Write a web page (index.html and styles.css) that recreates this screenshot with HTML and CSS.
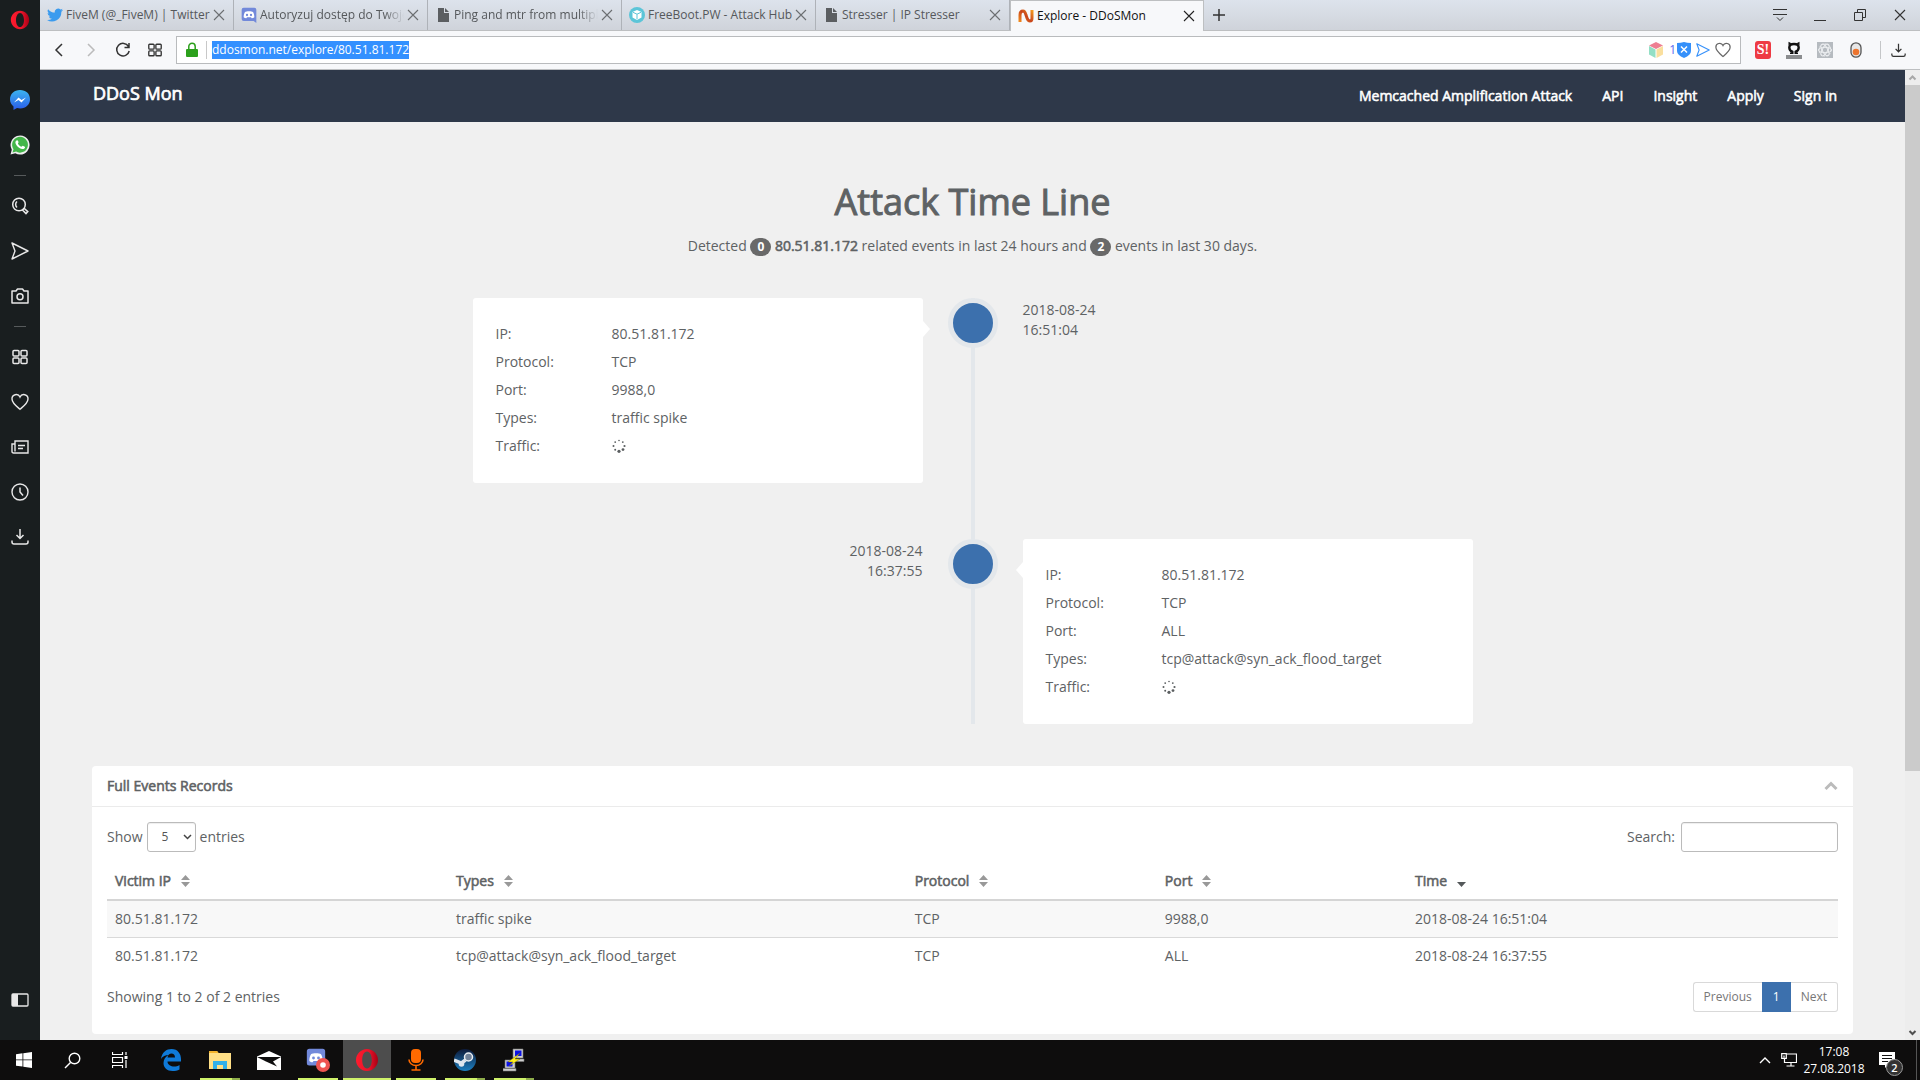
FILE: index.html
```html
<!DOCTYPE html>
<html lang="en">
<head>
<meta charset="utf-8">
<title>Explore - DDoSMon</title>
<link rel="stylesheet" href="styles.css">
</head>
<body>
<svg class="defs" aria-hidden="true">
  <defs>
    <linearGradient id="g-opera" x1="0" x2="1" y1="0" y2="0"><stop offset="0" stop-color="#ff1b2d"/><stop offset=".6" stop-color="#e8132a"/><stop offset="1" stop-color="#a70014"/></linearGradient>
    <linearGradient id="g-msg" x1="0" x2="0" y1="0" y2="1"><stop offset="0" stop-color="#3cb4f0"/><stop offset="1" stop-color="#2a5be8"/></linearGradient>
    <linearGradient id="g-n" x1="0" x2="1" y1="1" y2="0"><stop offset="0" stop-color="#f08a1c"/><stop offset=".5" stop-color="#c8441c"/><stop offset="1" stop-color="#f39a1e"/></linearGradient>
    <linearGradient id="g-steam" x1="0" x2="0" y1="0" y2="1"><stop offset="0" stop-color="#0d1a3a"/><stop offset="1" stop-color="#1d7fc0"/></linearGradient>
  </defs>
  <symbol id="i-opera" viewBox="0 0 24 24"><path fill="url(#g-opera)" fill-rule="evenodd" d="M12 1C6 1 1 6 1 12S6 23 12 23 23 18 23 12 18 1 12 1zm0 2.500c3 0 4.800 4 4.800 8.500s-1.800 8.500-4.800 8.500S7.200 16.500 7.200 12 9 3.500 12 3.500z"/></symbol>
  <symbol id="i-x" viewBox="0 0 12 12"><path d="M1 1l10 10M11 1L1 11" fill="none" stroke="currentColor" stroke-width="1.100"/></symbol>
  <symbol id="i-doc" viewBox="0 0 12 16"><path d="M1 1h6v5h5v9H1z" fill="#5b5e61"/><path d="M8 1l4 4H8z" fill="#5b5e61"/></symbol>
  <symbol id="i-discord" viewBox="0 0 24 24"><path d="M4 1h16a3 3 0 013 3v20l-4-3H4a3 3 0 01-3-3V4a3 3 0 013-3z" fill="#7289da"/><path d="M6 7.500C8 6 16 6 18 7.500c1.500 2.500 2 5 2 8-1 1-2.500 1.500-4 1.500l-1-1.500H9L8 17c-1.500 0-3-.5-4-1.500 0-3 .5-5.500 2-8z" fill="#fff"/><circle cx="9" cy="12" r="1.700" fill="#7289da"/><circle cx="15" cy="12" r="1.700" fill="#7289da"/></symbol>
  <symbol id="i-grid" viewBox="0 0 18 18"><g fill="none" stroke="currentColor" stroke-width="1.500"><rect x="2" y="2.500" width="6" height="5.500" rx="1"/><rect x="10" y="2.500" width="6" height="5.500" rx="1"/><rect x="2" y="10" width="6" height="5.500" rx="1"/><rect x="10" y="10" width="6" height="5.500" rx="1"/></g></symbol>
  <symbol id="i-heart" viewBox="0 0 18 18"><path d="M9 16.300C5 13 1 10 1 6a4.200 4.200 0 018-2 4.200 4.200 0 018 2c0 4-4 7-8 10.300z" fill="none" stroke="currentColor" stroke-width="1.400"/></symbol>
  <symbol id="i-send" viewBox="0 0 18 18"><path d="M1 1l16 8-16 8 3-8z" fill="none" stroke="currentColor" stroke-width="1.400" stroke-linejoin="round"/></symbol>
  <symbol id="i-down" viewBox="0 0 18 18"><path d="M9 1v9M5.500 7L9 10.500 12.500 7M1 12.500v1.500q0 2 2 2h12q2 0 2-2v-1.500" fill="none" stroke="currentColor" stroke-width="1.500"/></symbol>
  <symbol id="i-spin" viewBox="0 0 14 14"><g fill="#5a5e60"><circle cx="7" cy="12.300" r="1.600"/><circle cx="11" cy="10.600" r="1.400"/><circle cx="12.500" cy="7" r="1.100"/><circle cx="10.800" cy="3.100" r=".9"/><circle cx="7" cy="1.500" r=".8"/><circle cx="3.200" cy="3.100" r=".9"/><circle cx="1.500" cy="7" r="1"/><circle cx="3.200" cy="10.800" r="1"/></g></symbol>
  <symbol id="i-sort" viewBox="0 0 9 12"><path d="M4.500 0L9 5H0zM4.500 12L9 7H0z" fill="#999"/></symbol>
</svg>

<div class="desktop">
  <nav class="side" aria-label="Browser sidebar">
    <button class="side-logo" aria-label="Opera menu"><svg width="20" height="20"><use href="#i-opera"/></svg></button>
    <button aria-label="Messenger"><svg width="20" height="20" viewBox="0 0 20 20"><path d="M10 0C4 0 0 4 0 9.500c0 3 1.500 5 3.500 7V20l3.500-2c7 2 13-2.500 13-8.500S16 0 10 0z" fill="url(#g-msg)"/><path d="M4 12.500L8.500 7.500l3 2.500L16 7.500l-4.500 5-3-2.500z" fill="#fff"/></svg></button>
    <button aria-label="WhatsApp"><svg width="20" height="20" viewBox="0 0 20 20"><path d="M.5 19.500l1.300-4.800A9.500 9.500 0 1110 19.500a10 10 0 01-4.700-1.200z" fill="#eee"/><path d="M2.500 17.500l1-3.300a7.900 7.900 0 112.600 2.400z" fill="#43b649"/><path d="M6.500 5.500c1-.8 1.500 0 2 1.500.2.700-.8 1.300-.5 1.700.8 1.500 1.800 2.300 3.300 3 .6.100 1-1.200 1.600-1 2.600 1.200 2.500 1.400 1.500 2.700-1 1-3 1-5-.3-2.400-1.600-4-3.800-4-5.500 0-1 .5-1.600 1.100-2.100z" fill="#fff"/></svg></button>
    <hr>
    <button aria-label="Search"><svg width="18" height="18" viewBox="0 0 18 18"><g fill="none" stroke="currentColor" stroke-width="1.500"><circle cx="8" cy="7.500" r="6.300"/><path d="M6 4.500a4 4 0 000 6M11.500 13l1.800-1.600 3.500 3.200-1.800 2z"/></g></svg></button>
    <button aria-label="My Flow"><svg width="18" height="18"><use href="#i-send"/></svg></button>
    <button aria-label="Snapshot"><svg width="18" height="18" viewBox="0 0 18 18"><g fill="none" stroke="currentColor" stroke-width="1.500"><path d="M1 4h4l1.500-2h5L13 4h4v12H1z" stroke-linejoin="round"/><circle cx="9" cy="9.700" r="3"/></g></svg></button>
    <hr>
    <button aria-label="Speed Dial"><svg width="18" height="18"><use href="#i-grid"/></svg></button>
    <button aria-label="Bookmarks"><svg width="18" height="18"><use href="#i-heart"/></svg></button>
    <button aria-label="Personal news"><svg width="18" height="18" viewBox="0 0 18 18"><path d="M4 3h13v12H2.500Q1 15 1 13.500V6h3zM4 6v7.500M7 7.500h7M7 10.500h5" fill="none" stroke="currentColor" stroke-width="1.400"/></svg></button>
    <button aria-label="History"><svg width="18" height="18" viewBox="0 0 18 18"><path d="M9 4.500V9l3 3.500" fill="none" stroke="currentColor" stroke-width="1.500"/><circle cx="9" cy="9" r="8" fill="none" stroke="currentColor" stroke-width="1.400"/></svg></button>
    <button aria-label="Downloads"><svg width="18" height="18"><use href="#i-down"/></svg></button>
    <button class="side-last" aria-label="Sidebar setup"><svg width="18" height="16" viewBox="0 0 18 16"><rect x="1" y="2" width="16" height="12" rx="1" fill="none" stroke="currentColor" stroke-width="1.300"/><path d="M1 2h6v12H1z" fill="currentColor"/></svg></button>
  </nav>

  <div class="browser">
    <div class="tabs">
      <div class="tab"><svg width="16" height="16" viewBox="0 0 24 24"><path fill="#3b9bee" d="M24 4.600a10 10 0 01-2.800.8 5 5 0 002.100-2.700 10 10 0 01-3.100 1.200 4.900 4.900 0 00-8.400 4.500A14 14 0 011.700 3.200a4.900 4.900 0 001.500 6.500 4.900 4.900 0 01-2.200-.6 4.900 4.900 0 003.900 4.900 5 5 0 01-2.200.1 4.900 4.900 0 004.600 3.400A9.900 9.900 0 010 19.500a14 14 0 0021.500-12.400A10 10 0 0024 4.600z"/></svg><span>FiveM (@_FiveM) | Twitter</span><button aria-label="Close tab"><svg width="12" height="12"><use href="#i-x"/></svg></button></div>
      <div class="tab long"><svg width="16" height="16"><use href="#i-discord"/></svg><span>Autoryzuj dostęp do Twoje</span><button aria-label="Close tab"><svg width="12" height="12"><use href="#i-x"/></svg></button></div>
      <div class="tab long"><svg width="16" height="16"><use href="#i-doc"/></svg><span>Ping and mtr from multiple</span><button aria-label="Close tab"><svg width="12" height="12"><use href="#i-x"/></svg></button></div>
      <div class="tab"><svg width="16" height="16" viewBox="0 0 16 16"><circle cx="8" cy="8" r="8" fill="#5cc5d8"/><path d="M8 3l4.500 2v5.500L8 13l-4.500-2.500V5z" fill="#fff"/><path d="M4 5.300l4 1.900 4-1.900M8 7.200v5" fill="none" stroke="#5cc5d8"/></svg><span>FreeBoot.PW - Attack Hub</span><button aria-label="Close tab"><svg width="12" height="12"><use href="#i-x"/></svg></button></div>
      <div class="tab"><svg width="16" height="16"><use href="#i-doc"/></svg><span>Stresser | IP Stresser</span><button aria-label="Close tab"><svg width="12" height="12"><use href="#i-x"/></svg></button></div>
      <div class="tab active"><svg width="16" height="16" viewBox="0 0 16 16"><path d="M2 14V7q0-4 3-4 2 0 3 4l1 3q1 3 3 3t2-3V2" fill="none" stroke="url(#g-n)" stroke-width="3"/></svg><span>Explore - DDoSMon</span><button aria-label="Close tab"><svg width="12" height="12"><use href="#i-x"/></svg></button></div>
      <button class="new-tab" aria-label="New tab"><svg width="12" height="12" viewBox="0 0 12 12"><path d="M6 0v12M0 6h12" stroke="#333" stroke-width="1.500"/></svg></button>
      <div class="win">
        <button aria-label="Tab menu"><svg width="14" height="14" viewBox="0 0 14 14"><path d="M0 1.500h14M0 6.500h14M4 9.500l3 3 3-3" fill="none" stroke="#333"/></svg></button>
        <button aria-label="Minimise"><svg width="12" height="12" viewBox="0 0 12 12"><path d="M0 11.500h12" stroke="#333"/></svg></button>
        <button aria-label="Restore"><svg width="12" height="12" viewBox="0 0 12 12"><path d="M.5 3.500h8v8h-8zM3.500 3.500v-3h8v8h-3" fill="none" stroke="#333"/></svg></button>
        <button aria-label="Close window"><svg width="12" height="12"><use href="#i-x"/></svg></button>
      </div>
    </div>

    <div class="toolbar">
      <button aria-label="Back"><svg width="16" height="16" viewBox="0 0 16 16"><path d="M11 2L5 8l6 6" fill="none" stroke="#333" stroke-width="1.500"/></svg></button>
      <button aria-label="Forward"><svg width="16" height="16" viewBox="0 0 16 16"><path d="M5 2l6 6-6 6" fill="none" stroke="#bbb" stroke-width="1.500"/></svg></button>
      <button aria-label="Reload"><svg width="16" height="16" viewBox="0 0 16 16"><path d="M13.500 4.500A6.300 6.300 0 1014.200 9M14 1v4.500H9.500" fill="none" stroke="#333" stroke-width="1.500"/></svg></button>
      <button aria-label="Speed Dial"><svg width="16" height="16"><use href="#i-grid"/></svg></button>
      <div class="address">
        <svg class="lock" width="14" height="16" viewBox="0 0 14 16"><rect x="1" y="7" width="12" height="8" rx="1" fill="#2ca01c"/><path d="M3.800 7V4.500a3.200 3.200 0 016.400 0V7" fill="none" stroke="#2ca01c" stroke-width="1.500"/></svg>
        <a class="url" href="#"><mark>ddosmon.net/explore/80.51.81.172</mark></a>
        <svg width="16" height="18" viewBox="0 0 16 18"><path d="M8 1l7 3.500L8 8 1 4.500z" fill="#ee7f92"/><path d="M1 5l6.500 3.400V17L1 13.500z" fill="#93dfc5"/><path d="M15 5L8.500 8.400V17l6.500-3.500z" fill="#fadf9e"/></svg>
        <span class="count">1</span>
        <svg width="14" height="16" viewBox="0 0 14 16"><path d="M0 1q4 0 7-1 3 1 7 1v8q0 4-7 7Q0 13 0 9z" fill="#3590fa"/><path d="M4 4.500l6 6M10 4.500l-6 6" stroke="#fff" stroke-width="1.500"/></svg>
        <svg class="blue" width="14" height="14"><use href="#i-send"/></svg>
        <svg class="grey" width="16" height="16"><use href="#i-heart"/></svg>
      </div>
      <div class="exts">
        <button class="ext-s" aria-label="Stylish">S!</button>
        <button aria-label="GitHub"><svg width="16" height="18" viewBox="0 0 16 18"><path d="M6.300 13v-2.300C4.500 10 3.300 8.800 3.300 6.500S5 3 8 3s4.700 1.200 4.700 3.500-1.200 3.500-3 4.200V13" fill="none" stroke="#111" stroke-width="2.400"/><path d="M2.500.800l3 1.500-3 2zM13.500.800l-3 1.500 3 2z" fill="#111"/><path d="M4 12.300h3M9 12.300h3" stroke="#111" stroke-width="1.500"/><path d="M0 14h16v4H0z" fill="#8b8d8f"/></svg></button>
        <button aria-label="React tools"><svg width="16" height="16" viewBox="0 0 16 16"><path d="M0 0h16v16H0z" fill="#b6bbc0"/><g fill="none" stroke="#eef0f2"><ellipse cx="8" cy="8" rx="6.500" ry="2.700"/><ellipse cx="8" cy="8" rx="6.500" ry="2.700" transform="rotate(60 8 8)"/><ellipse cx="8" cy="8" rx="6.500" ry="2.700" transform="rotate(120 8 8)"/><circle cx="8" cy="8" r="6" stroke-dasharray="2 1"/></g></svg></button>
        <button aria-label="Toggle"><svg width="12" height="16" viewBox="0 0 12 16"><rect x="1" y=".8" width="10" height="14.400" rx="5" fill="#e7e7e7" stroke="#555" stroke-width="1.300"/><circle cx="6" cy="10" r="3.300" fill="#ec742e"/></svg></button>
        <button class="dl" aria-label="Downloads"><svg width="15" height="15"><use href="#i-down"/></svg></button>
      </div>
    </div>

    <div class="view">
      <div class="page">
        <header class="navbar">
          <a class="brand" href="#">DDoS Mon</a>
          <nav class="menu"><a href="#">Memcached Amplification Attack</a><a href="#">API</a><a href="#">Insight</a><a href="#">Apply</a><a href="#">Sign in</a></nav>
        </header>

        <main>
          <h1>Attack Time Line</h1>
          <p class="lead">Detected <span class="badge">0</span> <strong>80.51.81.172</strong> related events in last 24 hours and <span class="badge">2</span> events in last 30 days.</p>

          <section class="timeline">
            <article class="event">
              <dl class="card">
                <dt>IP:</dt><dd>80.51.81.172</dd>
                <dt>Protocol:</dt><dd>TCP</dd>
                <dt>Port:</dt><dd>9988,0</dd>
                <dt>Types:</dt><dd>traffic spike</dd>
                <dt>Traffic:</dt><dd><svg width="14" height="14"><use href="#i-spin"/></svg></dd>
              </dl>
              <span class="dot"></span>
              <time>2018-08-24<br>16:51:04</time>
            </article>
            <article class="event flip">
              <time>2018-08-24<br>16:37:55</time>
              <span class="dot"></span>
              <dl class="card">
                <dt>IP:</dt><dd>80.51.81.172</dd>
                <dt>Protocol:</dt><dd>TCP</dd>
                <dt>Port:</dt><dd>ALL</dd>
                <dt>Types:</dt><dd>tcp@attack@syn_ack_flood_target</dd>
                <dt>Traffic:</dt><dd><svg width="14" height="14"><use href="#i-spin"/></svg></dd>
              </dl>
            </article>
          </section>

          <section class="panel">
            <div class="panel-head"><h2>Full Events Records</h2><button aria-label="Collapse"><svg width="14" height="10" viewBox="0 0 14 10"><path d="M1.500 8L7 2.500 12.500 8" fill="none" stroke="#bbb" stroke-width="3"/></svg></button></div>
            <div class="panel-body">
              <div class="row">
                <label class="length">Show <span class="pick"><select><option>5</option><option>10</option></select><svg width="9" height="6" viewBox="0 0 9 6"><path d="M1 1l3.500 3.500L8 1" fill="none" stroke="#444" stroke-width="1.500"/></svg></span> entries</label>
                <label class="search">Search: <input type="search"></label>
              </div>
              <table>
                <colgroup><col class="c-ip"><col class="c-types"><col class="c-proto"><col class="c-port"><col></colgroup>
                <thead><tr>
                  <th>Victim IP<svg width="9" height="12"><use href="#i-sort"/></svg></th>
                  <th>Types<svg width="9" height="12"><use href="#i-sort"/></svg></th>
                  <th>Protocol<svg width="9" height="12"><use href="#i-sort"/></svg></th>
                  <th>Port<svg width="9" height="12"><use href="#i-sort"/></svg></th>
                  <th>Time<svg width="9" height="12" viewBox="0 0 9 12"><path d="M0 7h9l-4.500 5z" fill="#54585a"/></svg></th>
                </tr></thead>
                <tbody>
                  <tr><td>80.51.81.172</td><td>traffic spike</td><td>TCP</td><td>9988,0</td><td>2018-08-24 16:51:04</td></tr>
                  <tr><td>80.51.81.172</td><td>tcp@attack@syn_ack_flood_target</td><td>TCP</td><td>ALL</td><td>2018-08-24 16:37:55</td></tr>
                </tbody>
              </table>
              <div class="row foot">
                <span>Showing 1 to 2 of 2 entries</span>
                <nav class="pager"><a href="#">Previous</a><a class="on" href="#">1</a><a href="#">Next</a></nav>
              </div>
            </div>
          </section>
        </main>
      </div>
      <div class="scroll" aria-hidden="true">
        <svg width="15" height="15" viewBox="0 0 15 15"><path d="M4.500 9.500l3-3 3 3" fill="none" stroke="#a8a8a8" stroke-width="2"/></svg>
        <span class="thumb"></span>
        <svg width="15" height="15" viewBox="0 0 15 15"><path d="M4.500 6l3 3 3-3" fill="none" stroke="#505050" stroke-width="2"/></svg>
      </div>
    </div>
  </div>
</div>

<footer class="taskbar">
  <button aria-label="Start"><svg width="16" height="16" viewBox="0 0 16 16"><path d="M0 2.200L6.500 1.300v6.200H0zM7.300 1.200L16 0v7.500H7.300zM0 8.300h6.500v6.300L0 13.700zM7.300 8.300H16V16l-8.700-1.200z" fill="#fff"/></svg></button>
  <button aria-label="Search"><svg width="17" height="17" viewBox="0 0 17 17"><circle cx="10.500" cy="6.500" r="5.300" fill="none" stroke="#fff" stroke-width="1.400"/><path d="M6.500 10.500L1 16" stroke="#fff" stroke-width="1.400"/></svg></button>
  <button class="view-btn" aria-label="Task view"><svg width="16" height="16" viewBox="0 0 16 16"><path d="M.5 0v2.500h10V0M.5 16v-2.500h10V16M.5 5.500h10v5H.5zM14 0v3M14 8v8" fill="none" stroke="#fff" stroke-width="1.200"/><path d="M12.500 4h3v3h-3z" fill="#fff"/></svg></button>
  <button class="app" aria-label="Edge"><svg width="20" height="22" viewBox="0 0 20 22"><path d="M0 10C1 3 5.500 0 10.500 0 17 0 20 5 20 10v2.500H6.500c0 3.500 3.500 5 6.500 5 2 0 4-.5 5.500-1.500v4.500c-2 1-4.500 1.500-7 1.500C6 22 2.500 18.500 2.500 14c0-3.500 2-6.500 5-8C4.500 6 1.500 7.500 0 10zm6.500-1.500H14C14 6 12.500 4.500 10.500 4.500S7 6 6.500 8.500z" fill="#0f7ad8"/></svg></button>
  <button class="app run multi" aria-label="File Explorer"><svg width="22" height="20" viewBox="0 0 22 20"><path d="M0 1h8l1.500 2H22v16H0z" fill="#ffdf86"/><path d="M0 1h8l1.500 2H0z" fill="#f3b32c"/><path d="M4 19v-8h14v8h-4v-4H8v4z" fill="#31b0ea"/></svg></button>
  <button class="app" aria-label="Mail"><svg width="24" height="19" viewBox="0 0 24 19"><path d="M0 5.500L12 0l12 5.500V19H0z" fill="#fff"/><path d="M0 6h24l-8 4.500 4 5L9 10.500z" fill="#0e0d0d"/></svg></button>
  <button class="app run" aria-label="Discord"><svg width="24" height="24" viewBox="0 0 24 24"><svg width="20" height="20"><use href="#i-discord"/></svg><circle cx="17" cy="17" r="7" fill="#ef5350"/><circle cx="17" cy="17" r="2.800" fill="#fff"/></svg></button>
  <button class="app run current" aria-label="Opera"><svg width="24" height="24"><use href="#i-opera"/></svg></button>
  <button class="app run" aria-label="Recorder"><svg width="16" height="22" viewBox="0 0 16 22"><rect x="3" y="0" width="10" height="14" rx="4" fill="#ff6a00"/><path d="M1 10.500a7 6 0 0014 0M8 17v4M3.500 21h9" fill="none" stroke="#ff6a00" stroke-width="1.600"/></svg></button>
  <button class="app run multi" aria-label="Steam"><svg width="22" height="22" viewBox="0 0 22 22"><circle cx="11" cy="11" r="11" fill="url(#g-steam)"/><path d="M0 11l7.500 3 4-3" stroke="#dfe6ee" stroke-width="3.500" fill="none"/><circle cx="7.500" cy="15" r="2.800" fill="#dfe6ee"/><circle cx="14.500" cy="8" r="4" fill="#6f8199" stroke="#e8edf2" stroke-width="1.500"/></svg></button>
  <button class="app run multi" aria-label="PuTTY"><svg width="22" height="24" viewBox="0 0 22 24"><g fill="#cfcfcf" stroke="#777" stroke-width=".6"><path d="M10 1h10v9H10zM9 11h12v2.500H9zM2 12h10v8H2zM0 20.500h13V23H0z"/></g><path d="M12 2.500h6.500V8H12zM3.500 13.500H9.500v5h-6z" fill="#0c12e6"/><path d="M17 5L5 14h5l-4 4 11-7h-5z" fill="#ffee1a" stroke="#665c00" stroke-width=".4"/></svg></button>
  <div class="tray">
    <button aria-label="Hidden icons"><svg width="12" height="8" viewBox="0 0 12 8"><path d="M1 7l5-5 5 5" fill="none" stroke="#fff" stroke-width="1.400"/></svg></button>
    <button aria-label="Network"><svg width="16" height="14" viewBox="0 0 16 14"><path d="M6 1h9.500v8.500h-12V6M10 9.500V13M5.500 13h8M.7.700h4.600v4.600H.7zM3 2.500v2" fill="none" stroke="#fff" stroke-width="1.200"/></svg></button>
    <time class="clock">17:08<br>27.08.2018</time>
    <button class="notes" aria-label="Notifications"><svg width="16" height="16" viewBox="0 0 16 16"><path d="M0 0h16v13H9l-3 3v-3H0z" fill="#fff"/><path d="M3 3.500h10M3 6.500h10M3 9.500h6" stroke="#111"/></svg><span>2</span></button>
    <button class="peek" aria-label="Show desktop"></button>
  </div>
</footer>
</body>
</html>
```
FILE: styles.css
```css
* { box-sizing: border-box; }
body {
  margin: 0;
  height: 100vh;
  display: flex;
  flex-direction: column;
  overflow: hidden;
  font: 14px/20px "Open Sans", "Noto Sans", sans-serif;
  color: #5e6264;
}
button {
  display: flex;
  align-items: center;
  justify-content: center;
  padding: 0;
  border: 0;
  background: none;
  color: inherit;
  font: inherit;
}
a { color: inherit; text-decoration: none; }
svg { flex: none; display: block; }
.defs { position: absolute; width: 0; height: 0; }

.desktop { flex: 1; min-height: 0; display: flex; }

/* Browser sidebar */
.side {
  width: 40px;
  flex: none;
  display: flex;
  flex-direction: column;
  background: #191e1f;
  color: #e8e8e8;
}
.side button { height: 45px; }
.side .side-logo { height: 40px; margin-bottom: 37px; }
.side .side-last { margin-top: auto; margin-bottom: 18px; }
.side hr { width: 12px; margin: 8px auto 7px; border: 0; border-top: 1px solid #565a5b; }

.browser { flex: 1; min-width: 0; display: flex; flex-direction: column; }

/* Tab strip */
.tabs {
  height: 31px;
  display: flex;
  background: linear-gradient(#dde3ec, #cfd3da);
  border-bottom: 1px solid #bdbfc1;
  font-size: 12px;
  color: #55585b;
}
.tab {
  width: 194px;
  display: flex;
  align-items: center;
  gap: 3px;
  padding: 0 8px 0 7px;
  border-right: 1px solid #aeb2b8;
}
.tab span { flex: 1; overflow: hidden; white-space: nowrap; }
.tab.long span { mask-image: linear-gradient(90deg, #000 calc(100% - 20px), transparent); }
.tab button { color: #6b6e71; }
.tab.active {
  height: 31px;
  background: #f7f8fa;
  border: 1px solid #bdbfc1;
  border-bottom: 0;
  color: #111;
}
.tab.active button { color: #222; }
.new-tab { width: 30px; }
.win { display: flex; margin-left: auto; color: #333; }
.win button { width: 40px; }

/* Address bar */
.toolbar {
  height: 39px;
  display: flex;
  align-items: center;
  padding-left: 3px;
  background: #f7f8fa;
  border-bottom: 1px solid #bdbfc1;
}
.toolbar > button { width: 32px; height: 38px; color: #333; }
.address {
  flex: 1;
  height: 28px;
  margin-left: 5px;
  padding: 0 9px 0 8px;
  display: flex;
  align-items: center;
  gap: 5px;
  background: #fff;
  border: 1px solid #b9bbbd;
  font-size: 12px;
}
.url { flex: 1; margin-left: 2px; padding-left: 5px; border-left: 1px solid #c8c8c8; line-height: 18px; }
.url mark { display: inline-block; background: #3390ff; color: #fff; }
.count { color: #5b6cf0; margin-right: -4px; }
.blue { color: #3590fa; }
.grey { color: #666; }
.exts { display: flex; align-items: center; width: 179px; padding-left: 6px; }
.exts button { width: 31px; height: 18px; }
.exts .ext-s {
  width: 16px;
  margin: 0 7px 0 8px;
  border-radius: 3px;
  background: #ee3a43;
  color: #fff;
  font: bold 14px/18px "Liberation Serif", serif;
}
.exts .dl { flex: 1; margin-left: 9px; padding-right: 4px; border-left: 1px solid #c4c6c8; color: #333; }

/* Web page */
.view { flex: 1; min-height: 0; display: flex; }
.page { flex: 1; min-width: 0; overflow: hidden; background: #f0f0f0; }
.navbar {
  height: 52px;
  display: flex;
  align-items: center;
  justify-content: space-between;
  padding: 0 53px;
  background: #2e3849;
  color: #fff;
}
.brand { font-size: 18px; padding-bottom: 6px; }
.brand, .menu a, strong, h2, th { font-weight: 400; -webkit-text-stroke: .04em; }
.menu { display: flex; }
.menu a { padding: 0 15px; }
h1 {
  margin: 56px 0 10px;
  font-size: 36px;
  line-height: 48px;
  font-weight: 400;
  text-align: center;
  -webkit-text-stroke: 1px;
}
.lead { margin: 0 0 42px; text-align: center; }
.badge {
  display: inline-block;
  padding: 0 7px;
  border-radius: 9px;
  background: #696969;
  color: #fff;
  font-size: 12px;
  line-height: 18px;
  font-weight: 700;
}

/* Timeline */
.timeline {
  max-width: 1000px;
  margin: 0 auto 42px;
  display: grid;
  gap: 56px;
  background: linear-gradient(#e3e7eb, #e3e7eb) center / 4px 100% no-repeat;
}
.event { display: grid; grid-template-columns: 1fr 100px 1fr; }
.card {
  position: relative;
  margin: 0;
  padding: 22px 23px 23px;
  display: grid;
  grid-template-columns: 116px 1fr;
  line-height: 28px;
  background: #fff;
  border-radius: 3px;
}
.card dd { margin: 0; display: flex; align-items: center; }
.card::after {
  content: "";
  position: absolute;
  top: 23px;
  left: 100%;
  border: 8px solid transparent;
  border-left: 7px solid #fff;
  border-right: 0;
}
.flip .card::after { left: auto; right: 100%; border-left: 0; border-right: 7px solid #fff; }
.dot {
  width: 50px;
  height: 50px;
  justify-self: center;
  border: 5px solid #e3e7eb;
  border-radius: 50%;
  background: #3c70ad;
}
.event time { padding-top: 2px; }
.flip time { text-align: right; }

/* Records panel */
.panel { margin: 0 52px; background: #fff; border-radius: 4px; }
.panel-head {
  height: 41px;
  padding: 0 15px;
  display: flex;
  align-items: center;
  justify-content: space-between;
  border-bottom: 1px solid #ebebeb;
}
h2 { margin: 0; font-size: 14px; }
.panel-body { padding: 15px 15px 22px; }
.row { display: flex; justify-content: space-between; }
.length, .search { display: flex; align-items: center; gap: 4px; height: 30px; }
.search { gap: 6px; }
.pick { display: flex; align-items: center; justify-content: flex-end; }
.pick svg { margin-left: -13px; margin-right: 4px; pointer-events: none; }
select, input {
  height: 30px;
  border: 1px solid #bbb;
  border-radius: 3px;
  background: #fff;
  box-shadow: inset 0 1px 1px #eee;
  font: 12px/18px "Open Sans", "Noto Sans", sans-serif;
  color: #555;
}
select { width: 49px; padding-left: 14px; appearance: none; }
input { width: 157px; padding: 5px 10px; }
table { width: 100%; margin-top: 11px; table-layout: fixed; border-collapse: collapse; }
.c-ip { width: 19.7%; }
.c-types { width: 26.5%; }
.c-proto, .c-port { width: 14.45%; }
th, td { padding: 8px; text-align: left; }
th { border-bottom: 2px solid #d5d5d5; }
th svg { display: inline-block; margin-left: 10px; vertical-align: -1px; }
td { border-bottom: 1px solid #d9d9d9; }
tr:last-child td { border-bottom: 0; }
tbody tr:nth-child(odd) { background: #f8f8f8; }
.foot { margin-top: 8px; align-items: center; }
.pager { display: flex; font-size: 12px; line-height: 18px; color: #777; }
.pager a { padding: 5px 10px; border: 1px solid #d9d9d9; }
.pager a:first-child { border-right: 0; border-radius: 3px 0 0 3px; }
.pager a:last-child { border-left: 0; border-radius: 0 3px 3px 0; }
.pager .on { background: #3c70ad; border-color: #3c70ad; color: #fff; }

/* Scrollbar */
.scroll { width: 15px; display: flex; flex-direction: column; justify-content: space-between; background: #ededed; }
.thumb { flex: 0 1 686px; margin-bottom: auto; background: #cbcbcb; }

/* Taskbar */
.taskbar { height: 40px; flex: none; display: flex; background: #0e0d0d; color: #fff; }
.taskbar > button { width: 48px; }
.view-btn { margin-right: 3px; }
.taskbar .app { margin-right: 1px; border-top: 2px solid transparent; border-bottom: 2px solid transparent; }
.run {
  background: linear-gradient(#cff26a, #cff26a) center bottom / 40px 2px no-repeat border-box;
}
.run.multi {
  background-image: linear-gradient(90deg, #cff26a 32px, #8fae4b 32px);
}
.run.current { background: linear-gradient(#cff26a, #cff26a) bottom / 48px 2px no-repeat border-box, #4d4d4d border-box; }
.tray { margin-left: auto; display: flex; align-items: center; }
.tray button { width: 24px; height: 40px; }
.clock { width: 66px; text-align: center; font-size: 12px; line-height: 17px; }
.tray .notes { position: relative; width: 40px; margin-right: 9px; }
.tray .peek { width: 4px; border-left: 1px solid #555; }
.notes span {
  position: absolute;
  top: 19px;
  left: 19px;
  width: 17px;
  height: 17px;
  border: 1px solid #999;
  border-radius: 50%;
  background: #333;
  font-size: 11px;
  line-height: 15px;
  font-weight: 600;
}
```
